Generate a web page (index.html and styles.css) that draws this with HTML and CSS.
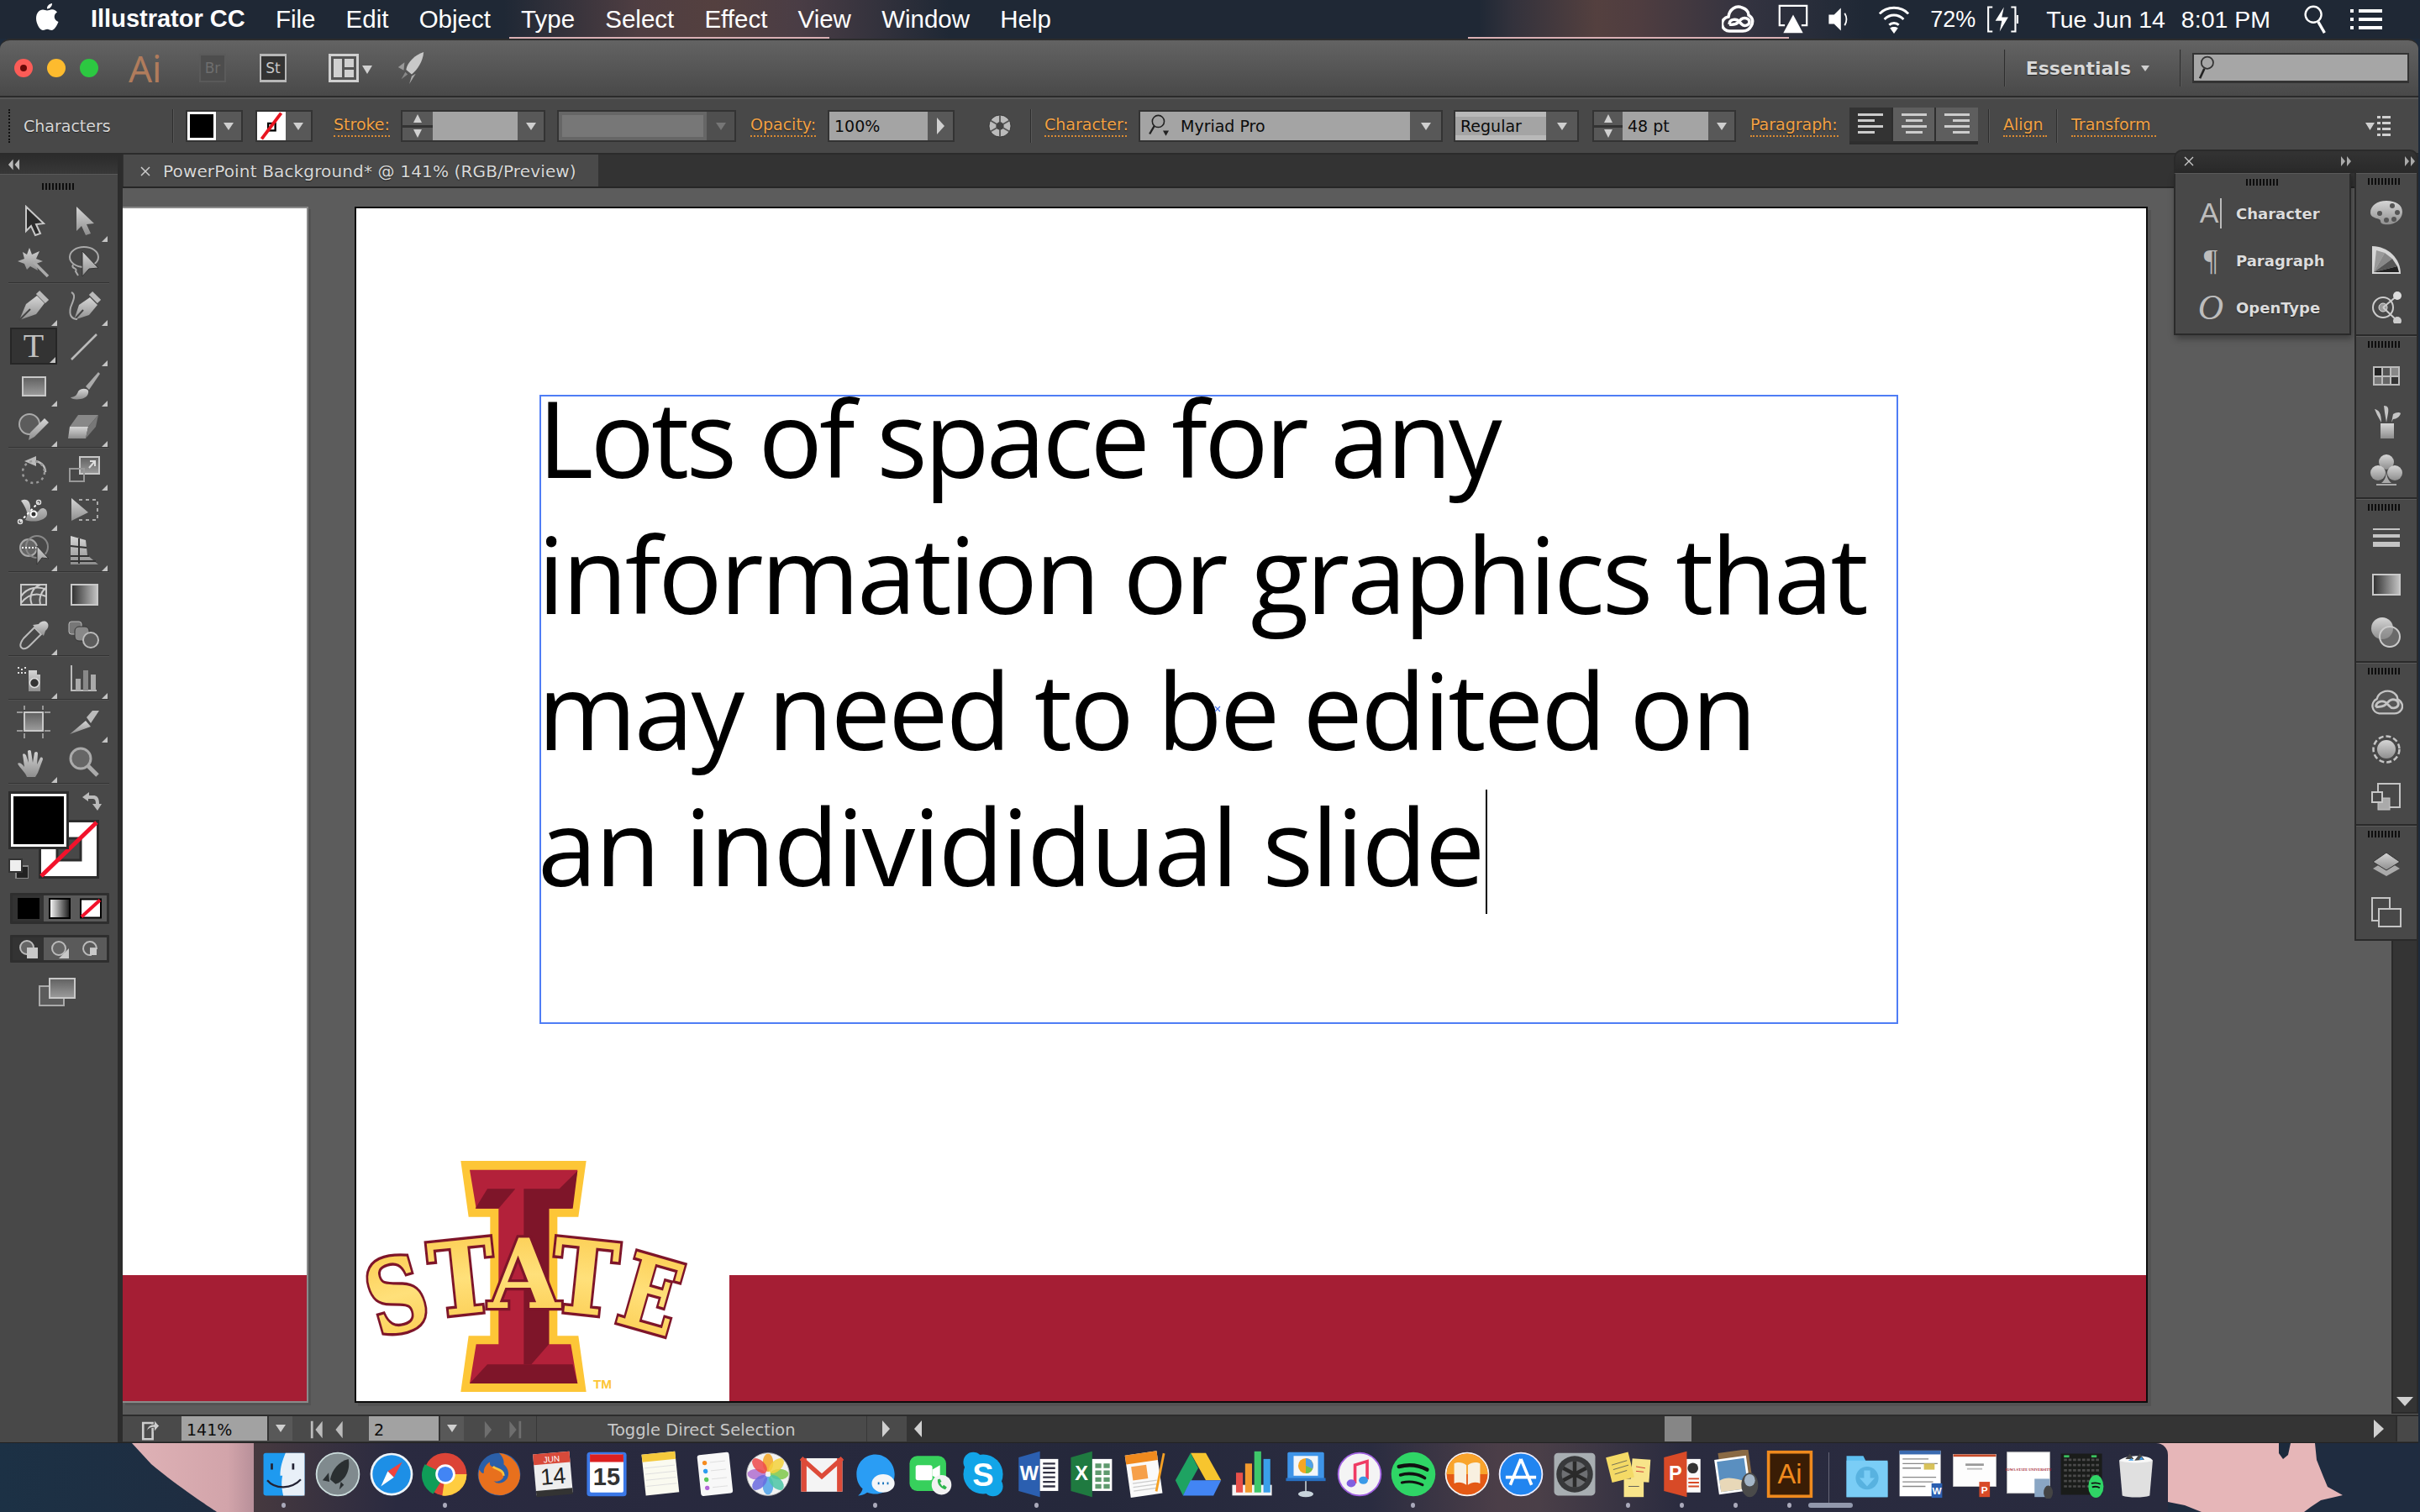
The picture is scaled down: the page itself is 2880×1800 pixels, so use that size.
FILE: index.html
```html
<!DOCTYPE html>
<html lang="en">
<head>
<meta charset="utf-8">
<title>Illustrator CC</title>
<link rel="stylesheet" href="styles.css">
</head>
<body>
<svg class="defs" aria-hidden="true"><defs>
<linearGradient id="ig" x1="0" y1="0" x2="0" y2="1"><stop offset="0" stop-color="#d6d6d6"/><stop offset="1" stop-color="#8e8e8e"/></linearGradient>
<linearGradient id="ih" x1="0" y1="0" x2="1" y2="0"><stop offset="0" stop-color="#2e2e2e"/><stop offset="1" stop-color="#c4c4c4"/></linearGradient>
<linearGradient id="iw" x1="0" y1="0" x2="1" y2="0"><stop offset="0" stop-color="#f4f4f4"/><stop offset="1" stop-color="#222"/></linearGradient>
<linearGradient id="id" x1="0" y1="0" x2="0" y2="1"><stop offset="0" stop-color="#606060"/><stop offset="1" stop-color="#9c9c9c"/></linearGradient>
<linearGradient id="pk" x1="0" y1="0" x2="1" y2="0"><stop offset="0" stop-color="#dfb2b6"/><stop offset=".7" stop-color="#d2a4aa"/><stop offset="1" stop-color="#a98490"/></linearGradient>
<linearGradient id="ly" x1="0" y1="0" x2="0" y2="1"><stop offset="0" stop-color="#fbc94a"/><stop offset=".5" stop-color="#ffe07a"/><stop offset="1" stop-color="#fbc94a"/></linearGradient>
</defs></svg>

<header class="menubar">
  <svg class="apple" viewBox="0 0 28 34"><path d="M20 0c.3 3-2.6 6.800-6 6.500C13.600 3.300 16.800.3 20 0zM14 8.500c2 0 3.500-1.300 6-1.300 2.600 0 4.800 1.400 6 3.300-5 3-4 9.500 1.500 11.500-1.500 4-5 10-8 10-2 0-3-1.300-5.300-1.300S11 32 9 32C5 32 1 23.500 1 18 1 11.500 5 7.500 9 7.500c2 0 3.500 1 5 1z" fill="#fff"/></svg>
  <nav class="menus">
    <b class="appname">Illustrator CC</b><span>File</span><span>Edit</span><span>Object</span><span>Type</span><span>Select</span><span>Effect</span><span>View</span><span>Window</span><span>Help</span>
  </nav>
  <div class="status-icons">
    <svg class="si si-cc" viewBox="0 0 40 40"><g fill="none" stroke="#fff" stroke-width="3.500"><path d="M10 34a8.500 8.500 0 0 1-2-17C9 8 17 3 24 6c6 2 8 6 8 9 5 3 6 8 3 13-2 4-5 6-10 6z"/><path d="M9 26c0-7 9-7 12-3l3 3c3 3 9 1 9-3s-6-6-10-3l-4 4c-3 3-10 2-10 2"/></g></svg>
    <svg class="si si-air" viewBox="0 0 40 40"><path d="M9 28H2V2h36v26h-7" fill="none" stroke="#fff" stroke-width="2.500"/><path d="M20 14 33 38H7z" fill="#fff"/></svg>
    <svg class="si si-vol" viewBox="0 0 30 40"><path d="M1 14h7l9-9v30l-9-9H1z" fill="#fff"/><path d="M22 12c3 5 3 11 0 16" fill="none" stroke="#fff" stroke-width="2"/></svg>
    <svg class="si si-wifi" viewBox="0 0 40 40"><g fill="none" stroke="#fff" stroke-width="3"><path d="M2 13C11 3 29 3 38 13"/><path d="M8 20c7-7 17-7 24 0"/><path d="M14 27c3-3 9-3 12 0"/></g><path d="M20 38l-5-7c3-2 7-2 10 0z" fill="#fff"/></svg>
    <span class="batt">72%</span>
    <svg class="si si-bat" viewBox="0 0 46 40"><path d="M8 3H2v34h6M34 3h6v34h-6M43 14v12" fill="none" stroke="#fff" stroke-width="2.500"/><path d="M24 3 12 22h9l-3 15 12-20h-9z" fill="#fff"/></svg>
    <span class="clock">Tue Jun 14</span>
    <span class="clock clock-2">8:01 PM</span>
    <svg class="si si-search" viewBox="0 0 30 40"><circle cx="13" cy="14" r="10" fill="none" stroke="#fff" stroke-width="2.500"/><path d="M19 23l8 14" stroke="#fff" stroke-width="3.500"/></svg>
    <svg class="si si-list" viewBox="0 0 38 30"><path d="M0 3h4v4H0zM10 3h28v4H10zM0 13h4v4H0zM10 13h28v4H10zM0 23h4v4H0zM10 23h28v4H10z" fill="#fff"/></svg>
  </div>
</header>

<div class="window">
  <div class="appbar">
    <span class="light light-r"><i></i></span><span class="light light-y"></span><span class="light light-g"></span>
    <span class="ai-mark">Ai</span>
    <span class="brbox">Br</span>
    <span class="stbox">St</span>
    <svg class="arr-layout" viewBox="0 0 52 34"><rect x="1.500" y="1.500" width="33" height="31" fill="#555" stroke="#d0d0d0" stroke-width="3"/><rect x="6" y="6" width="10" height="22" fill="#d0d0d0"/><rect x="19" y="6" width="11" height="10" fill="#d0d0d0"/><rect x="19" y="19" width="11" height="9" fill="#d0d0d0"/><path d="M40 14h12l-6 10z" fill="#d0d0d0"/></svg>
    <svg class="rocket" viewBox="0 0 34 40"><path d="M33 0C22 3 12 14 11 22l7 6C25 22 32 12 33 0z" fill="#c8c8c8"/><path d="M9 13 1 19l7 4z" fill="#999"/><path d="M18 30l-3 10 8-13z" fill="#aaa"/><path d="M10 25l-5 9 8-6z" fill="#888"/></svg>
    <span class="vsep vsep-ess"></span>
    <span class="essentials">Essentials</span>
    <i class="caret caret-ess"></i>
    <span class="vsep vsep-search"></span>
    <div class="searchfield"><svg class="searchglass" viewBox="0 0 22 34"><circle cx="12" cy="11" r="8" fill="none" stroke="#333" stroke-width="2"/><path d="M8 19 2 32" stroke="#222" stroke-width="3"/></svg></div>
  </div>

  <div class="control">
    <i class="cgrip"></i>
    <span class="ctl-title">Characters</span>
    <i class="vsep"></i>
    <div class="combo swatch swatch-1"><span class="sw-fill"></span><span class="dd"><i class="caret"></i></span></div>
    <div class="combo swatch swatch-2"><span class="sw-none"><svg viewBox="0 0 36 44"><rect width="36" height="44" fill="#fff"/><rect x="13" y="18" width="11" height="11" fill="none" stroke="#000" stroke-width="3"/><path d="M3 42 33 2" stroke="#e8141f" stroke-width="5"/></svg></span><span class="dd"><i class="caret"></i></span></div>
    <span class="lnk lnk-stroke">Stroke:</span>
    <div class="combo combo-stroke"><span class="stepper"><i class="up"></i><i class="down"></i></span><span class="field field-stroke"></span><span class="dd"><i class="caret"></i></span></div>
    <div class="combo combo-dis"><span class="field-dis"></span><span class="dd dd-dis"><i class="caret caret-dim"></i></span></div>
    <span class="lnk lnk-opacity">Opacity:</span>
    <div class="combo combo-op"><span class="field field-op">100%</span><span class="dd dd-op"><i class="tri-r"></i></span></div>
    <svg class="globe" viewBox="0 0 30 30"><circle cx="15" cy="15" r="14" fill="#bbb" stroke="#333"/><path d="M15 1v28M3 8l24 14M27 8 3 22" stroke="#555" stroke-width="2"/><circle cx="15" cy="15" r="5" fill="#444"/></svg>
    <i class="vsep vsep-char"></i>
    <span class="lnk lnk-char">Character:</span>
    <div class="combo combo-font"><span class="field field-font"><svg class="fontglass" viewBox="0 0 34 38"><circle cx="15" cy="12" r="9" fill="none" stroke="#222" stroke-width="2"/><path d="M9 19 2 31" stroke="#222" stroke-width="3"/><path d="M22 26h9l-4.500 8z" fill="#222"/></svg>Myriad Pro</span><span class="dd dd-font"><i class="caret"></i></span></div>
    <div class="combo combo-weight"><span class="field field-weight">Regular</span><span class="dd dd-font"><i class="caret"></i></span></div>
    <div class="combo combo-size"><span class="stepper"><i class="up"></i><i class="down"></i></span><span class="field field-size">48 pt</span><span class="dd"><i class="caret"></i></span></div>
    <span class="lnk lnk-para">Paragraph:</span>
    <div class="aligns">
      <span class="al al-on"><svg viewBox="0 0 30 28"><path d="M0 1h30v3H0zM0 8h20v3H0zM0 15h30v3H0zM0 22h20v3H0z" fill="#ccc"/></svg></span>
      <span class="al"><svg viewBox="0 0 30 28"><path d="M0 1h30v3H0zM5 8h20v3H5zM0 15h30v3H0zM5 22h20v3H5z" fill="#ccc"/></svg></span>
      <span class="al"><svg viewBox="0 0 30 28"><path d="M0 1h30v3H0zM10 8h20v3H10zM0 15h30v3H0zM10 22h20v3H10z" fill="#ccc"/></svg></span>
    </div>
    <i class="vsep vsep-p"></i>
    <span class="lnk lnk-align">Align</span>
    <i class="vsep vsep-a"></i>
    <span class="lnk lnk-trans">Transform</span>
    <svg class="ctlmenu" viewBox="0 0 30 26"><path d="M0 9h11l-5.500 9zM14 1h4v3h-4zM20 1h10v3H20zM14 8h4v3h-4zM20 8h10v3H20zM14 15h4v3h-4zM20 15h10v3H20zM14 22h4v3h-4zM20 22h10v3H20z" fill="#d0d0d0"/></svg>
  </div>

  <div class="workspace">
    <aside class="toolbar">
      <div class="tb-head"><svg class="chev" viewBox="0 0 16 14"><path d="M7 0 1 7l6 7zM15 0 9 7l6 7z" fill="#bbb"/></svg></div>
      <div class="tb-body">
        <i class="grip tb-grip"></i>
        <div class="tgroup">
          <div class="trow">
            <span class="tool"><svg viewBox="0 0 40 40"><path d="M11 2 32 22l-9 1 5 11-6 2-5-11-6 6z" fill="#2b2b2b" stroke="#c8c8c8" stroke-width="2"/></svg></span>
            <span class="tool more"><svg viewBox="0 0 40 40"><path d="M11 2 32 22l-9 1 5 11-6 2-5-11-6 6z" fill="url(#ig)"/></svg></span>
          </div>
          <div class="trow">
            <span class="tool"><svg viewBox="0 0 40 40"><path d="M15 3l3 8 9-4-4 9 8 3-8 3 2 8-9-5-4 4-3-7-8-3 8-3-2-8 5 3z" fill="url(#ig)"/><path d="M20 20l17 17" stroke="#aaa" stroke-width="3.500"/></svg></span>
            <span class="tool"><svg viewBox="0 0 40 40"><ellipse cx="20" cy="14" rx="17" ry="12" fill="none" stroke="#aaa" stroke-width="2"/><path d="M7 23c-3 5 6 4 3 8l3 5" fill="none" stroke="#aaa" stroke-width="2"/><path d="M18 7l19 20-11 1-8 9z" fill="url(#ig)" stroke="#333"/></svg></span>
          </div>
        </div>
        <i class="tsep"></i>
        <div class="tgroup">
          <div class="trow">
            <span class="tool more"><svg viewBox="0 0 40 40"><path d="M3 37 11 18l13-10 9 9-10 13z" fill="url(#ig)"/><path d="M3 37l13-13" stroke="#444" stroke-width="2"/><path d="M25 4l11 11" stroke="#bbb" stroke-width="6"/></svg></span>
            <span class="tool more"><svg viewBox="0 0 40 40"><path d="M8 37 14 19l13-9 9 9-10 12z" fill="url(#ig)"/><path d="M8 37l11-12" stroke="#444" stroke-width="2"/><path d="M28 5l10 10" stroke="#bbb" stroke-width="6"/><path d="M5 4c6 3 2 10-1 18-2 9 1 14 8 14" fill="none" stroke="#aaa" stroke-width="2"/></svg></span>
          </div>
          <div class="trow">
            <span class="tool tool-on more"><span class="t-glyph">T</span></span>
            <span class="tool more"><svg viewBox="0 0 40 40"><path d="M5 36 35 6" stroke="#bbb" stroke-width="2.500"/></svg></span>
          </div>
          <div class="trow">
            <span class="tool more"><svg viewBox="0 0 40 40"><rect x="7" y="9" width="27" height="22" fill="url(#id)" stroke="#c8c8c8" stroke-width="2"/></svg></span>
            <span class="tool more"><svg viewBox="0 0 40 40"><path d="M22 20 37 3l2 2-13 19z" fill="#aaa"/><path d="M4 33c6 0 8-4 9-7 3-4 10-4 12-1 1 4-2 9-9 10-6 1-11 0-12-2z" fill="url(#ig)"/></svg></span>
          </div>
          <div class="trow">
            <span class="tool more"><svg viewBox="0 0 40 40"><circle cx="15" cy="17" r="12" fill="#5c5c5c" stroke="#aaa" stroke-width="2"/><path d="M14 36l2-9 17-17 5 5-17 17z" fill="url(#ig)"/></svg></span>
            <span class="tool more"><svg viewBox="0 0 40 40"><path d="M13 6h24L25 20H3z" fill="#888"/><path d="M3 20h22l-3 14H1z" fill="url(#ig)"/><path d="M25 20 37 6l-3 14-12 14z" fill="#777"/></svg></span>
          </div>
        </div>
        <i class="tsep"></i>
        <div class="tgroup">
          <div class="trow">
            <span class="tool more"><svg viewBox="0 0 40 40"><path d="M34 22a13 13 0 0 0-14-13" fill="none" stroke="#bbb" stroke-width="2.500"/><path d="M23 3 9 9l14 6z" fill="#bbb"/><circle cx="20" cy="22" r="13" fill="none" stroke="#999" stroke-width="2.500" stroke-dasharray="3 4"/></svg></span>
            <span class="tool more"><svg viewBox="0 0 40 40"><rect x="15" y="4" width="23" height="20" fill="url(#id)" stroke="#c8c8c8" stroke-width="2"/><rect x="3" y="18" width="17" height="15" fill="none" stroke="#999" stroke-width="2"/><path d="M26 17 33 9M27 9h6v6" fill="none" stroke="#ddd" stroke-width="2"/></svg></span>
          </div>
          <div class="trow">
            <span class="tool more"><svg viewBox="0 0 40 40"><path d="M5 8c7-4 12 2 11 9-1 6 7 8 11 2 3-4 9-2 9 4 1 8-15 12-26 8 5-7 1-14-5-23z" fill="url(#ig)"/><path d="M4 33 26 10" stroke="#fff" stroke-width="2" stroke-dasharray="3 3"/><circle cx="20" cy="24" r="3.500" fill="#333" stroke="#fff" stroke-width="2"/><circle cx="4" cy="33" r="2.500" fill="none" stroke="#ddd" stroke-width="1.500"/><circle cx="26" cy="10" r="2.500" fill="none" stroke="#ddd" stroke-width="1.500"/></svg></span>
            <span class="tool"><svg viewBox="0 0 40 40"><path d="M5 5 25 22 5 32z" fill="url(#ig)"/><path d="M14 7h22v24H14" fill="none" stroke="#aaa" stroke-width="2" stroke-dasharray="4 4"/></svg></span>
          </div>
          <div class="trow">
            <span class="tool more"><svg viewBox="0 0 40 40"><circle cx="14" cy="16" r="10" fill="#666" stroke="#aaa" stroke-width="2"/><circle cx="24" cy="15" r="13" fill="none" stroke="#888" stroke-width="2"/><path d="M6 16h20" stroke="#fff" stroke-width="2" stroke-dasharray="2 2"/><path d="M24 14l14 15-8-1-6 8z" fill="url(#ig)" stroke="#333"/></svg></span>
            <span class="tool more"><svg viewBox="0 0 40 40"><path d="M4 2l18 5 2 18 13 11H4z" fill="url(#ig)"/><path d="M4 14l19 2M4 26h22M14 5v30M4 32h30" stroke="#333" stroke-width="2"/></svg></span>
          </div>
        </div>
        <i class="tsep"></i>
        <div class="tgroup">
          <div class="trow">
            <span class="tool"><svg viewBox="0 0 40 40"><rect x="5" y="8" width="30" height="24" fill="#555" stroke="#c8c8c8" stroke-width="2"/><path d="M5 22c8-12 22-12 30-8M5 30c6-8 16-14 30-8M18 32c-4-10 0-20 10-24M28 32c-2-8 0-14 6-20" fill="none" stroke="#ccc" stroke-width="2"/></svg></span>
            <span class="tool"><svg viewBox="0 0 40 40"><rect x="5" y="8" width="31" height="24" fill="url(#ih)" stroke="#c8c8c8" stroke-width="2"/></svg></span>
          </div>
          <div class="trow">
            <span class="tool more"><svg viewBox="0 0 40 40"><path d="M7 36c-5-2-2-8 1-12l13-13 8 8-13 13c-3 3-6 5-9 4z" fill="none" stroke="#bbb" stroke-width="2"/><path d="M19 8l13 13 2-6c3-2 5-7 2-10s-8-1-10 2z" fill="url(#ig)"/></svg></span>
            <span class="tool"><svg viewBox="0 0 40 40"><rect x="2" y="4" width="15" height="15" rx="3" fill="#777" stroke="#bbb"/><rect x="9" y="10" width="17" height="17" rx="5" fill="#888" stroke="#333"/><circle cx="28" cy="26" r="9" fill="#5c5c5c" stroke="#bbb" stroke-width="2"/></svg></span>
          </div>
        </div>
        <i class="tsep"></i>
        <div class="tgroup">
          <div class="trow">
            <span class="tool more"><svg viewBox="0 0 40 40"><path d="M14 10h10v5h4v20H14z" fill="url(#ig)"/><circle cx="21" cy="25" r="5.500" fill="#333" stroke="#ddd" stroke-width="1.500"/><path d="M1 6h2v2H1zM5 8h2v2H5zM9 6h2v2H9zM1 12h2v2H1zM5 12h2v2H5zM9 12h2v2H9z" fill="#ddd"/></svg></span>
            <span class="tool more"><svg viewBox="0 0 40 40"><path d="M5 4v30h30" fill="none" stroke="#bbb" stroke-width="2"/><rect x="10" y="20" width="6" height="14" fill="#aaa"/><rect x="19" y="10" width="6" height="24" fill="#888"/><rect x="28" y="15" width="6" height="19" fill="#aaa"/></svg></span>
          </div>
        </div>
        <i class="tsep"></i>
        <div class="tgroup">
          <div class="trow">
            <span class="tool"><svg viewBox="0 0 40 40"><rect x="9" y="8" width="22" height="22" fill="url(#id)" stroke="#c8c8c8" stroke-width="2"/><path d="M0 8h7M33 8h7M0 30h7M33 30h7M9 0v5M31 0v5M9 33v6M31 33v6" stroke="#999" stroke-width="2"/></svg></span>
            <span class="tool more"><svg viewBox="0 0 40 40"><path d="M3 34 22 18l6 7z" fill="url(#ig)"/><path d="M23 14 30 6h8l-10 15z" fill="#bbb"/></svg></span>
          </div>
          <div class="trow">
            <span class="tool more"><svg viewBox="0 0 40 40"><path d="M12 37c-2-6-8-10-11-16 2-2 5 0 8 4l-2-15c2-2 3 0 4 1l3 9-1-14c2-2 4-1 4 1l2 13 2-12c2-2 4-1 4 1l-1 13 4-8c2-1 3 0 3 2l-6 16-3 5z" fill="url(#ig)"/></svg></span>
            <span class="tool"><svg viewBox="0 0 40 40"><circle cx="16" cy="15" r="12" fill="#666" stroke="#aaa" stroke-width="3"/><path d="M25 24l11 11" stroke="#aaa" stroke-width="5"/></svg></span>
          </div>
        </div>
        <i class="tsep"></i>
        <div class="colorbox">
          <span class="stroke-box"><svg viewBox="0 0 72 70"><rect width="72" height="70" fill="#2c2c2c"/><rect x="3" y="3" width="66" height="64" fill="#fff"/><rect x="22" y="22" width="28" height="26" fill="#484848" stroke="#2c2c2c" stroke-width="3"/><path d="M3 67 69 3" stroke="#f2122b" stroke-width="5"/></svg></span>
          <span class="fill-box"></span>
          <svg class="swap" viewBox="0 0 24 22"><path d="M9 0 1 6l7 5V8h6c2 0 3 2 3 6h-4l6 8 5-8h-3c0-8-3-10-7-10H9z" fill="#bbb"/></svg>
          <svg class="defaults" viewBox="0 0 24 24"><rect x="9" y="9" width="15" height="15" fill="#222" stroke="#888" stroke-width="2"/><rect x="1" y="1" width="15" height="15" fill="#eee" stroke="#333" stroke-width="2"/></svg>
        </div>
        <div class="modes modes-a">
          <span class="mode mode-on"><i class="m-black"></i></span>
          <span class="mode"><i class="m-grad"></i></span>
          <span class="mode"><svg class="m-none" viewBox="0 0 26 24"><rect width="26" height="24" fill="#000"/><rect x="2" y="2" width="22" height="20" fill="#fff"/><path d="M2 22 24 2" stroke="#f2122b" stroke-width="4"/></svg></span>
        </div>
        <div class="modes modes-b">
          <span class="mode mode-on"><svg viewBox="0 0 22 22"><circle cx="9" cy="9" r="8" fill="#666" stroke="#bbb" stroke-width="2"/><rect x="9" y="9" width="13" height="13" fill="#c8c8c8"/></svg></span>
          <span class="mode"><svg viewBox="0 0 22 22"><circle cx="10" cy="10" r="8" fill="#666" stroke="#bbb" stroke-width="2"/><path d="M22 10v12H10z" fill="#c8c8c8"/></svg></span>
          <span class="mode"><svg viewBox="0 0 22 22"><path d="M11 18a8 8 0 1 1 7-8h-7z" fill="none" stroke="#bbb" stroke-width="2"/><rect x="10" y="10" width="8" height="8" fill="#c8c8c8"/></svg></span>
        </div>
        <svg class="screen" viewBox="0 0 44 34"><rect x="1" y="10" width="29" height="23" fill="#5c5c5c" stroke="#aaa" stroke-width="2"/><rect x="13" y="1" width="30" height="23" fill="url(#id)" stroke="#c8c8c8" stroke-width="2"/></svg>
      </div>
    </aside>

    <main class="main">
      <div class="tabrow">
        <div class="tab"><svg class="xmark" viewBox="0 0 12 12"><path d="M1 1l10 10M11 1 1 11" stroke="#ccc" stroke-width="1.500"/></svg><span>PowerPoint Background* @ 141% (RGB/Preview)</span></div>
      </div>
      <div class="canvas">
        <section class="artboard side">
          <div class="ab-page"></div>
          <div class="ab-band"><div class="band-red"></div></div>
        </section>
        <section class="artboard big">
          <div class="ab-page"></div>
          <div class="ab-band"><div class="band-white"></div><div class="band-red"></div></div>
          <div class="textframe">
            <p class="tl tl-1">Lots of space for any</p>
            <p class="tl tl-2">information or graphics that</p>
            <p class="tl tl-3">may need to be edited on</p>
            <p class="tl tl-4">an individidual slide</p>
          </div>
          <i class="caretbar"></i>
          <svg class="centermark" viewBox="0 0 8 8"><path d="M1 1l6 6M7 1 1 7" stroke="#4a78f0" stroke-width="1.200"/></svg>
          <svg class="logo" viewBox="75 20 1200 900">
            <path d="M445 65H893L865 265H790V690H865L893 890H445L473 690H550V265H473Z" fill="#fdc637"/>
            <path d="M477 97H862L840 235H760V720H838L862 860H477L500 720H580V235H500Z" fill="#b3213a"/>
            <path d="M670 165H797L862 100 845 235H760V720L697 792H670Z" fill="#7e1529"/>
            <path d="M540 165H640L580 235H497Z" fill="#7e1529"/>
            <path d="M540 792H845L862 860H477Z" fill="#7e1529"/>
            <g class="logo-letters">
              <text transform="translate(251 668) rotate(-16) scale(.95 1.200)">S</text>
              <text transform="translate(464 610) rotate(-6) scale(1.050 1.200)">T</text>
              <text transform="translate(874 610) rotate(6) scale(1.050 1.200)">T</text>
              <text transform="translate(1089 666) rotate(16) scale(.9 1.200)">E</text>
              <text transform="translate(672 591) scale(1.100 1.150)">A</text>
            </g>
            <text class="logo-tm" x="918" y="878">TM</text>
          </svg>
        </section>
        <div class="vscroll"><i class="tri-d"></i></div>
      </div>
      <div class="statusbar">
        <svg class="st-share" viewBox="0 0 26 32"><path d="M3 8h13v22H3z" fill="none" stroke="#ccc" stroke-width="3"/><path d="M8 20c0-7 5-10 10-10V4l7 8-7 8v-6c-4 0-8 1-10 6z" fill="#ccc" stroke="#444"/></svg>
        <div class="st-combo st-zoom"><span class="st-field">141%</span><span class="dd"><i class="caret"></i></span></div>
        <svg class="st-nav st-nav-a" viewBox="0 0 50 26"><path d="M1 2h3v22H1zM16 2v22L7 13zM42 2v22l-9-11z" fill="#bbb"/></svg>
        <div class="st-combo st-page"><span class="st-field">2</span><span class="dd"><i class="caret"></i></span></div>
        <svg class="st-nav st-nav-b" viewBox="0 0 50 26"><path d="M1 2v22l9-11zM33 2v22l9-11zM45 2h3v22h-3z" fill="#6e6e6e"/></svg>
        <div class="st-msg">Toggle Direct Selection</div>
        <span class="st-btn"><i class="tri-r tri-sm"></i></span>
        <div class="hscroll">
          <i class="tri-l"></i>
          <i class="thumb"></i>
          <i class="tri-r tri-big"></i>
        </div>
        <span class="corner"></span>
      </div>
      <aside class="dockpanel">
        <div class="dp-head">
          <svg class="dp-x" viewBox="0 0 12 12"><path d="M1 1l10 10M11 1 1 11" stroke="#ccc" stroke-width="1.300"/></svg>
          <svg class="dp-ff dp-ff-1" viewBox="0 0 14 12"><path d="M1 0l5 6-5 6zM8 0l5 6-5 6z" fill="#aaa"/></svg>
          <svg class="dp-ff dp-ff-2" viewBox="0 0 14 12"><path d="M1 0l5 6-5 6zM8 0l5 6-5 6z" fill="#aaa"/></svg>
        </div>
        <div class="dp-body">
          <div class="flyout">
            <i class="grip fly-grip"></i>
            <div class="fly-row"><span class="fly-ico fly-a">A<i></i></span><b>Character</b></div>
            <div class="fly-row"><span class="fly-ico fly-p">¶</span><b>Paragraph</b></div>
            <div class="fly-row"><span class="fly-ico fly-o">O</span><b>OpenType</b></div>
          </div>
          <div class="strip">
            <div class="sgroup s1"><i class="grip"></i>
              <span class="sic"><svg viewBox="0 0 40 40"><path d="M20 6C9 6 1 12 1 20c0 8 12 6 12 10 0 4 5 5 12 4 9-2 14-8 14-15 0-8-8-13-19-13z" fill="url(#ig)"/><circle cx="27" cy="12" r="3" fill="#555"/><circle cx="33" cy="20" r="3" fill="#555"/><circle cx="29" cy="28" r="3" fill="#555"/><circle cx="20" cy="29" r="3" fill="#555"/><circle cx="12" cy="21" r="3" fill="#555"/></svg></span>
              <span class="sic"><svg viewBox="0 0 40 40"><path d="M3 4c19 0 34 15 34 33H3z" fill="#d6d6d6"/><path d="M5 35 8 9l10 3z" fill="#999"/><path d="M5 35l13-23 9 7z" fill="#888"/><path d="M5 35l22-16 6 9z" fill="#555"/><path d="M5 35l28-7 2 7z" fill="#222"/></svg></span>
              <span class="sic"><svg viewBox="0 0 40 40"><circle cx="16" cy="21" r="12" fill="none" stroke="#ccc" stroke-width="2"/><circle cx="16" cy="21" r="5" fill="#999" stroke="#ddd"/><path d="M16 21 33 7M16 21l17 16" stroke="#ccc" stroke-width="2"/><circle cx="33" cy="7" r="5" fill="#ddd"/><circle cx="33" cy="37" r="5" fill="#ccc"/></svg></span>
            </div>
            <div class="sgroup s1"><i class="grip"></i>
              <span class="sic"><svg viewBox="0 0 40 40"><rect x="4" y="9" width="32" height="23" fill="#bbb"/><path d="M6 11h8v9H6z" fill="#222"/><path d="M16 11h8v9h-8z" fill="#555"/><path d="M26 11h8v9h-8z" fill="#888"/><path d="M6 22h8v8H6z" fill="#777"/><path d="M16 22h8v8h-8z" fill="#666"/><path d="M26 22h8v8h-8z" fill="#333"/></svg></span>
              <span class="sic"><svg viewBox="0 0 40 40"><rect x="13" y="21" width="16" height="18" fill="url(#ig)"/><path d="M14 20 9 11l-3-7c5 1 8 5 8 16zM20 20l-2-12-1-8c5 0 6 3 5 9zM26 20l2-10c3-2 7-3 9-1-1 4-5 7-9 7z" fill="#c4c4c4"/></svg></span>
              <span class="sic"><svg viewBox="0 0 40 40"><circle cx="20" cy="11" r="9" fill="url(#ig)"/><circle cx="10" cy="24" r="9" fill="url(#ig)"/><circle cx="30" cy="24" r="9" fill="url(#ig)"/><path d="M20 20c0 8-2 13-6 16h12c-4-3-6-8-6-16zM8 37h24v2H8z" fill="#aaa"/></svg></span>
            </div>
            <div class="sgroup s3"><i class="grip"></i>
              <span class="sic"><svg viewBox="0 0 40 40"><path d="M4 8h32v2H4zM4 15h32v4H4zM4 24h32v6H4z" fill="#c4c4c4"/></svg></span>
              <span class="sic"><svg viewBox="0 0 40 40"><rect x="4" y="7" width="32" height="24" fill="url(#ih)" stroke="#c8c8c8" stroke-width="2"/></svg></span>
              <span class="sic"><svg viewBox="0 0 40 40"><circle cx="15" cy="15" r="13" fill="url(#ig)"/><circle cx="24" cy="25" r="12" fill="#88888888" stroke="#ccc" stroke-width="2"/></svg></span>
            </div>
            <div class="sgroup s4"><i class="grip"></i>
              <span class="sic"><svg viewBox="0 0 42 40"><path d="M12 34a9.500 9.500 0 0 1-3-18c2-8 11-12 19-9 4 2 7 5 7 9 6 3 7 9 5 13-2 3-5 5-9 5z" fill="#555" stroke="#c4c4c4" stroke-width="2.500"/><path d="M8 26c0-8 10-9 14-4l3 3c3 4 11 2 11-3s-7-7-11-4l-5 5c-3 3-12 3-12 3" fill="none" stroke="#c4c4c4" stroke-width="3"/></svg></span>
              <span class="sic"><svg viewBox="0 0 40 40"><circle cx="20" cy="20" r="15.500" fill="none" stroke="#c4c4c4" stroke-width="2.500" stroke-dasharray="6 3"/><circle cx="20" cy="20" r="11" fill="url(#ig)"/></svg></span>
              <span class="sic"><svg viewBox="0 0 40 40"><path d="M10 17V5h26v28H24" fill="none" stroke="#c4c4c4" stroke-width="2"/><rect x="10" y="22" width="14" height="14" fill="#aaa" stroke="#c8c8c8"/><rect x="3" y="15" width="12" height="12" fill="#484848" stroke="#c8c8c8" stroke-width="2"/></svg></span>
            </div>
            <div class="sgroup s5"><i class="grip"></i>
              <span class="sic"><svg viewBox="0 0 40 40"><path d="M4 24 20 14l16 10-16 9z" fill="#aaa"/><path d="M4 16 20 5l16 11-16 10z" fill="url(#ig)" stroke="#333"/></svg></span>
              <span class="sic"><svg viewBox="0 0 40 40"><rect x="3" y="3" width="21" height="27" fill="#484848" stroke="#c4c4c4" stroke-width="2"/><rect x="11" y="16" width="26" height="21" fill="#484848" stroke="#c4c4c4" stroke-width="2"/></svg></span>
            </div>
          </div>
        </div>
      </aside>
    </main>
  </div>
</div>

<footer class="desk">
  <svg class="wall" viewBox="0 0 2880 82" preserveAspectRatio="none"><path d="M157 0H320V82H258C240 70 210 50 180 25z" fill="url(#pk)"/><path d="M2560 0H2755L2757 20 2765 40 2770 52 2788 62 2762 68 2750 76 2742 82H2620L2600 74 2580 70H2560z" fill="#e6b6b8"/><path d="M2712 0h14l-3 14-6 5-5-7z" fill="#1c2a3c"/></svg>
  <div class="dock">
    <span class="di on"><svg viewBox="0 0 64 64"><rect x="5" y="4" width="54" height="56" rx="3" fill="#1e9af0"/><path d="M34 4h25v56H31c-2-9-3-16-1-26h-3c0-12 3-20 7-30z" fill="#e8f0f8"/><path d="M16 18v8M44 18v8" stroke="#223" stroke-width="3"/><path d="M10 40c10 12 32 12 44-1" fill="none" stroke="#223" stroke-width="2.500"/></svg></span>
    <span class="di"><svg viewBox="0 0 64 64"><circle cx="32" cy="32" r="28" fill="#808a8e" stroke="#cdd" stroke-width="2"/><path d="M46 12c-12 3-22 14-24 27l7 6c12-4 20-18 17-33z" fill="#2a2f31"/><path d="M20 30l-8 10 9 2zM36 42l-2 10 6-6z" fill="#2a2f31"/></svg></span>
    <span class="di"><svg viewBox="0 0 64 64"><circle cx="32" cy="32" r="28" fill="#eef4f8"/><circle cx="32" cy="32" r="25" fill="#1d8fe6"/><path d="M46 16 27 28l8 8z" fill="#f0443e"/><path d="M18 48 27 28l8 8z" fill="#fff"/></svg></span>
    <span class="di on"><svg viewBox="0 0 64 64"><circle cx="32" cy="32" r="28" fill="#dc4437"/><path d="M32 32 16 58a28 28 0 0 1-11-39z" fill="#0f9d58"/><path d="M32 32h28a28 28 0 0 1-32 28z" fill="#ffcd40"/><circle cx="32" cy="32" r="13" fill="#fff"/><circle cx="32" cy="32" r="10" fill="#4285f4"/></svg></span>
    <span class="di"><svg viewBox="0 0 64 64"><circle cx="32" cy="32" r="28" fill="#2b5fa8"/><path d="M32 4c20 2 32 22 26 38-5 14-21 21-34 16C10 54 2 40 6 26c2 4 5 6 6 4-1-6 4-12 8-14-1 4 1 6 4 6 4 4 14 4 14 12 0 5-7 9-13 7 5 5 14 3 18-4 3-7 0-14-5-18 1-6-2-11-6-15z" fill="#e8701d"/><path d="M24 22c4 4 14 4 14 12" fill="none" stroke="#f9c23c" stroke-width="3"/></svg></span>
    <span class="di"><svg viewBox="0 0 64 64"><g transform="rotate(-5 32 32)"><rect x="8" y="4" width="48" height="54" fill="#eee"/><rect x="8" y="4" width="48" height="14" fill="#d84a3a"/><text class="d-cal-m" x="32" y="16">JUN</text><text class="d-cal" x="32" y="45">14</text><rect x="8" y="52" width="48" height="8" fill="#333"/></g></svg></span>
    <span class="di"><svg viewBox="0 0 64 64"><rect x="6" y="3" width="52" height="58" rx="4" fill="#3b78e7"/><rect x="10" y="6" width="44" height="50" rx="2" fill="#fff"/><rect x="10" y="6" width="44" height="10" fill="#dc2020"/><text class="d-gcal" x="32" y="46">15</text></svg></span>
    <span class="di"><svg viewBox="0 0 64 64"><g transform="rotate(-6 32 32)"><rect x="10" y="4" width="44" height="54" fill="#fafaf0"/><rect x="10" y="4" width="44" height="10" fill="#f4c93c"/><path d="M12 22h40M12 30h40M12 38h40M12 46h40" stroke="#ddd" stroke-width="1"/></g></svg></span>
    <span class="di"><svg viewBox="0 0 64 64"><g transform="rotate(-6 32 32)"><rect x="12" y="5" width="42" height="54" rx="3" fill="#f8f8f8"/><circle cx="21" cy="16" r="3" fill="#f68b1f"/><circle cx="21" cy="27" r="3" fill="#2d9cf0"/><circle cx="21" cy="38" r="3" fill="#5ac85a"/><circle cx="21" cy="49" r="3" fill="#b266d8"/><path d="M28 16h20M28 27h20M28 38h20M28 49h20" stroke="#ddd"/></g></svg></span>
    <span class="di"><svg viewBox="0 0 64 64"><circle cx="32" cy="32" r="28" fill="#f2f2f2" stroke="#aaa"/><g fill-opacity=".85"><ellipse cx="32" cy="17" rx="7" ry="12" fill="#f5a623"/><ellipse cx="32" cy="47" rx="7" ry="12" fill="#4ea1e8"/><ellipse cx="17" cy="32" rx="12" ry="7" fill="#b06fd0"/><ellipse cx="47" cy="32" rx="12" ry="7" fill="#7fc94a"/><ellipse cx="21" cy="21" rx="7" ry="12" transform="rotate(-45 21 21)" fill="#ee4a4a"/><ellipse cx="43" cy="21" rx="7" ry="12" transform="rotate(45 43 21)" fill="#f4d23c"/><ellipse cx="21" cy="43" rx="7" ry="12" transform="rotate(45 21 43)" fill="#6a6adf"/><ellipse cx="43" cy="43" rx="7" ry="12" transform="rotate(-45 43 43)" fill="#4cc6a6"/></g></svg></span>
    <span class="di"><svg viewBox="0 0 64 64"><rect x="5" y="11" width="54" height="44" fill="#f4f4f4"/><path d="M5 11 32 35 59 11" fill="none" stroke="#dd4b39" stroke-width="6"/><path d="M5 11h7v44H5zM52 11h7v44h-7z" fill="#dd4b39"/></svg></span>
    <span class="di on"><svg viewBox="0 0 64 64"><path d="M32 6c-14 0-25 11-25 26 0 8 3 15 8 19-1 4-3 7-6 9 5 0 9-2 12-4 3 1 7 2 11 2 14 0 25-12 25-26S46 6 32 6z" fill="#2a9df4"/><ellipse cx="42" cy="44" rx="15" ry="12" fill="#f4f6f8"/><path d="M35 44h2M41 44h2M47 44h2" stroke="#0d6dbb" stroke-width="3"/></svg></span>
    <span class="di"><svg viewBox="0 0 64 64"><rect x="6" y="8" width="48" height="46" rx="10" fill="#37d05c"/><rect x="14" y="20" width="22" height="20" rx="3" fill="#fff"/><path d="M36 26l10-6v20l-10-6z" fill="#fff"/><circle cx="48" cy="46" r="13" fill="#f2f2f2"/><path d="M43 39c-1 6 4 12 10 13l2-3-4-3-2 2-3-5 2-1-2-4z" fill="#2fb64e"/></svg></span>
    <span class="di"><svg viewBox="0 0 64 64"><circle cx="32" cy="32" r="26" fill="#12a5e8"/><circle cx="19" cy="16" r="13" fill="#12a5e8"/><circle cx="45" cy="48" r="13" fill="#12a5e8"/><text class="d-skype" x="32" y="47">S</text></svg></span>
    <span class="di on"><svg viewBox="0 0 64 64"><path d="M8 10 36 2v60L8 54z" fill="#2b5fb0"/><rect x="36" y="12" width="24" height="42" fill="#fff"/><path d="M40 18h16M40 24h16M40 30h16M40 36h16M40 42h16M40 48h16" stroke="#334" stroke-width="2.500"/><text class="d-w" x="22" y="40">W</text></svg></span>
    <span class="di"><svg viewBox="0 0 64 64"><path d="M6 10 34 2v60L6 54z" fill="#1f7a40"/><rect x="34" y="12" width="26" height="42" fill="#fff"/><path d="M38 18h8v6h-8zM49 18h8v6h-8zM38 27h8v6h-8zM49 27h8v6h-8zM38 36h8v6h-8zM49 36h8v6h-8zM38 45h8v6h-8zM49 45h8v6h-8z" fill="#5f9a6e"/><text class="d-w" x="20" y="40">X</text></svg></span>
    <span class="di"><svg viewBox="0 0 64 64"><g transform="rotate(-8 32 32)"><rect x="10" y="4" width="42" height="56" fill="#fafafa"/><rect x="10" y="4" width="42" height="12" fill="#f08a1e"/><rect x="16" y="20" width="20" height="18" fill="#f6a04a"/><path d="M15 42h32M15 47h32M15 52h32" stroke="#ccc" stroke-width="1.500"/></g><path d="M46 54 56 4l3 1-10 50z" fill="#f6a124"/></svg></span>
    <span class="di"><svg viewBox="0 0 64 64"><path d="M22 4h20l20 36H42z" fill="#f7c52e"/><path d="M22 4 2 40l10 20 20-36z" fill="#1ea362"/><path d="M12 60h40l10-20H22z" fill="#4285f4"/></svg></span>
    <span class="di"><svg viewBox="0 0 64 64"><rect x="6" y="46" width="52" height="14" fill="#f4f4f4"/><rect x="11" y="30" width="9" height="26" fill="#e8504a"/><rect x="23" y="18" width="9" height="38" fill="#f29a2e"/><rect x="35" y="2" width="9" height="54" fill="#3fc86a"/><rect x="47" y="12" width="9" height="44" fill="#3aa0ea"/></svg></span>
    <span class="di"><svg viewBox="0 0 64 64"><rect x="8" y="3" width="48" height="36" rx="2" fill="#3e94e8"/><rect x="6" y="37" width="52" height="4" fill="#2670c4"/><rect x="16" y="8" width="32" height="26" fill="#f2f6fa"/><circle cx="32" cy="21" r="10" fill="#f5a623"/><path d="M32 21V11a10 10 0 0 1 9 14z" fill="#4ea1e8"/><path d="M32 21l9 4a10 10 0 0 1-9 6z" fill="#6ec04a"/><rect x="31" y="41" width="2" height="17" fill="#b4bcc4"/><ellipse cx="32" cy="58" rx="10" ry="4" fill="#c8d4dc"/></svg></span>
    <span class="di"><svg viewBox="0 0 64 64"><circle cx="32" cy="32" r="28" fill="#f4f4f4" stroke="#a060e0" stroke-width="2"/><path d="M26 44V20l16-5v24" fill="none" stroke="#ef3c64" stroke-width="4"/><ellipse cx="21" cy="44" rx="6" ry="5" fill="#8060e0"/><ellipse cx="37" cy="40" rx="6" ry="5" fill="#3a9ae8"/></svg></span>
    <span class="di on"><svg viewBox="0 0 64 64"><circle cx="32" cy="32" r="29" fill="#2fd566"/><g fill="none" stroke="#111" stroke-linecap="round"><path d="M13 22c12-3 26-2 37 4" stroke-width="5"/><path d="M15 33c10-3 23-2 32 4" stroke-width="4"/><path d="M17 43c9-2 19-1 27 3" stroke-width="3.500"/></g></svg></span>
    <span class="di"><svg viewBox="0 0 64 64"><circle cx="32" cy="32" r="28" fill="#e45a15" stroke="#f4f4f4" stroke-width="2"/><path d="M5 32a27 27 0 0 1 54 0z" fill="#f9a42c"/><path d="M31 20c-5-4-12-4-16-2v26c5-2 11-2 16 2zM33 20c5-4 12-4 16-2v26c-5-2-11-2-16 2z" fill="#f8f0e0"/></svg></span>
    <span class="di"><svg viewBox="0 0 64 64"><circle cx="32" cy="32" r="28" fill="#2185f0" stroke="#eef" stroke-width="2"/><path d="M32 12 18 46M32 12l14 34M12 36h40" stroke="#fff" stroke-width="4" fill="none"/></svg></span>
    <span class="di"><svg viewBox="0 0 64 64"><rect x="5" y="4" width="54" height="56" rx="5" fill="#a8aeb2"/><circle cx="32" cy="32" r="24" fill="#38393b"/><circle cx="32" cy="32" r="17" fill="#6e7073"/><circle cx="32" cy="32" r="5" fill="#ccc"/><path d="M32 15v34M17 24l30 16M47 24 17 40" stroke="#2a2a2a" stroke-width="5"/></svg></span>
    <span class="di on"><svg viewBox="0 0 64 64"><rect x="36" y="12" width="24" height="30" fill="#f8e48a" transform="rotate(4 48 27)"/><rect x="26" y="38" width="26" height="24" fill="#f8e48a"/><rect x="6" y="6" width="30" height="34" fill="#f4da66" transform="rotate(-14 21 23)"/><path d="M10 20l20-6M12 26l20-6M14 32l16-5" stroke="#665" stroke-width="1"/><path d="M42 22l12 2M42 28l10 1" stroke="#c33"/><path d="M32 48h14" stroke="#555"/></svg></span>
    <span class="di on"><svg viewBox="0 0 64 64"><path d="M36 12h20v44H36z" fill="#fafafa"/><path d="M8 10 38 2v60L8 54z" fill="#d84a27"/><circle cx="46" cy="24" r="7" fill="#333"/><path d="M40 38h14M40 43h14M40 48h14" stroke="#d84a27" stroke-width="2"/><text class="d-w" x="23" y="40">P</text></svg></span>
    <span class="di on"><svg viewBox="0 0 64 64"><g transform="rotate(-8 28 30)"><rect x="12" y="2" width="40" height="44" fill="#8a6a44"/><rect x="6" y="10" width="42" height="46" fill="#fff"/><rect x="9" y="13" width="36" height="40" fill="#5a8fc0"/><path d="M9 38c12-6 24 2 36 6v9H9z" fill="#e8d8b8"/></g><ellipse cx="50" cy="46" rx="11" ry="16" fill="#4a4a4a"/><ellipse cx="50" cy="40" rx="7" ry="8" fill="#a4b6c8"/></svg></span>
    <span class="di on"><svg viewBox="0 0 64 64"><rect x="2" y="1" width="60" height="62" fill="#ef8a1e"/><rect x="6" y="5" width="52" height="54" fill="#3a1d05"/><text class="d-ai" x="32" y="44">Ai</text></svg></span>
    <i class="dock-sep"></i>
    <span class="di"><svg viewBox="0 0 64 64"><path d="M5 8h22l4 8h28v46H5z" fill="#5ebff0"/><path d="M5 14h54v48H5z" fill="#7acdf6"/><circle cx="32" cy="37" r="15" fill="#58b2e0"/><path d="M28 27h8v10h6L32 48 22 37h6z" fill="#7acdf6"/></svg></span>
    <span class="di"><svg viewBox="0 0 64 64"><rect x="4" y="1" width="54" height="60" fill="#fff"/><rect x="4" y="1" width="54" height="5" fill="#3a6ab0"/><path d="M8 12h34M8 18h46M8 24h24M8 36h44M8 42h40M8 48h30" stroke="#888" stroke-width="1.500"/><rect x="36" y="18" width="14" height="8" fill="#d8c25a"/><path d="M46 44h14v19H46z" fill="#2b5fb0"/><text class="d-mini" x="53" y="58">W</text></svg></span>
    <span class="di"><svg viewBox="0 0 64 64"><rect x="4" y="6" width="56" height="42" fill="#fdfdfd" stroke="#ccc"/><rect x="4" y="6" width="56" height="3" fill="#c74b2a"/><rect x="20" y="18" width="24" height="3" fill="#999"/><rect x="22" y="24" width="20" height="2" fill="#bbb"/><path d="M38 42h14v20H38z" fill="#d84a27"/><text class="d-mini" x="45" y="57">P</text></svg></span>
    <span class="di"><svg viewBox="0 0 64 64"><rect x="4" y="3" width="56" height="54" fill="#fff" stroke="#bbb"/><text class="d-isu" x="32" y="28">IOWA STATE UNIVERSITY</text><g transform="translate(38 38)"><rect x="2" y="0" width="20" height="24" fill="#8aa6c4"/><ellipse cx="20" cy="18" rx="6" ry="9" fill="#444"/></g></svg></span>
    <span class="di"><svg viewBox="0 0 64 64"><rect x="4" y="5" width="54" height="54" fill="#1a1c1a"/><path d="M8 13h46M8 20h46M8 27h46M8 34h46M8 41h46M8 48h46" stroke="#4a4a4a" stroke-width="3" stroke-dasharray="4 2"/><rect x="8" y="7" width="7" height="3" fill="#3ac060"/><rect x="44" y="7" width="7" height="3" fill="#3ac060"/><ellipse cx="50" cy="48" rx="10" ry="15" fill="#2fd566"/><path d="M44 44c4-1 8-1 12 1M45 49c3-1 7-1 10 1" stroke="#111" stroke-width="2" fill="none"/></svg></span>
    <span class="di"><svg viewBox="0 0 64 64"><path d="M10 14c10-3 34-3 44 0l-4 46c-8 3-28 3-36 0z" fill="#e0e0e0"/><path d="M10 14c10 4 34 4 44 0-4-8-36-8-44 0z" fill="#f8f8f8"/><path d="M18 12l6-7 5 7zM30 14l7-9 6 8z" fill="#444"/><path d="M22 14l4-3 3 3zM36 13l3-4 3 4z" fill="#3a9ae8"/></svg></span>
    <i class="dock-pill"></i>
  </div>
</footer>
</body>
</html>
```

FILE: styles.css
```css
* { box-sizing: border-box; }
html, body { margin: 0; padding: 0; }
body {
  width: 2880px; height: 1800px; overflow: hidden;
  display: flex; flex-direction: column;
  background: #1d2a3b;
  font-family: "DejaVu Sans", sans-serif;
  font-size: 19px;
  color: #d8d8d8;
}
.defs { display: block; width: 0; height: 0; }
i { display: block; font-style: normal; }
svg { display: block; }

/* menu bar */
.menubar {
  flex: none; height: 46px;
  display: flex; align-items: center;
  padding-left: 42px;
  color: #fff;
  font-family: "Liberation Sans", sans-serif;
  font-size: 29.500px;
  background:
    linear-gradient(90deg, transparent 606px, #d9b0b4 606px, #d9b0b4 987px, transparent 987px, transparent 1747px, #d9b0b4 1747px, #d9b0b4 2129px, transparent 2129px) 0 100% / 100% 2px no-repeat,
    linear-gradient(90deg, #1f2835 0, #1f2835 600px, #4f3e42 760px, #54403f 850px, #4a3d45 950px, #1f2835 1130px, #1f2835 1760px, #33323c 1800px, #54403f 1900px, #4f3d40 1950px, #333340 2080px, #1f2835 2220px);
}
.apple { width: 28px; height: 34px; margin-top: -5px; }
.menus { display: flex; margin-left: 38px; gap: 36.200px; }
.appname { font-weight: 700; font-size: 29px; }
.status-icons { display: flex; align-items: center; margin-left: auto; margin-right: 45px; font-size: 28.500px; }
.si { flex: none; }
.si-cc { width: 40px; height: 40px; }
.si-air { width: 40px; height: 36px; margin-left: 25px; }
.si-vol { width: 30px; height: 36px; margin-left: 20px; }
.si-wifi { width: 40px; height: 38px; margin-left: 30px; }
.batt { margin-left: 23px; font-size: 27px; }
.si-bat { width: 46px; height: 34px; margin-left: 10px; }
.clock { margin-left: 28px; white-space: nowrap; }
.clock-2 { margin-left: 19px; }
.si-search { width: 30px; height: 38px; margin-left: 38px; }
.si-list { width: 38px; height: 30px; margin-left: 27px; }

/* window */
.window {
  flex: none; height: 1672px; width: 2878px;
  display: flex; flex-direction: column;
  border-radius: 12px 12px 0 0;
  overflow: hidden;
  border-top: 2px solid #2c2c2c;
  background: #2a2a2a;
}
.appbar {
  flex: none; height: 68px;
  display: flex; align-items: center;
  background: linear-gradient(#636363, #494949);
  border-bottom: 2px solid #2b2b2b;
}
.light { width: 22px; height: 22px; border-radius: 50%; margin-left: 17px; flex: none; }
.light-r { margin-left: 17px; background: #fc5c57; display: flex; align-items: center; justify-content: center; }
.light-r i { width: 8px; height: 8px; border-radius: 50%; background: #6a0a08; }
.light-y { background: #fdbb2e; }
.light-g { background: #2cc841; }
.ai-mark { margin-left: 36px; width: 36px; font-family: "Noto Sans", sans-serif; font-size: 44px; color: #b07c5c; line-height: 1; }
.brbox, .stbox {
  width: 32px; height: 34px; margin-left: 48px;
  display: flex; align-items: center; justify-content: center;
  font-size: 17px;
}
.brbox { border: 2px solid #5a5a5a; color: #6e6e6e; background: #4d4d4d; }
.stbox { margin-left: 40px; border: 2px solid #b8b8b8; border-width: 3px 2px; background: #333; color: #c8c8c8; }
.arr-layout { width: 52px; height: 34px; margin-left: 50px; }
.rocket { width: 34px; height: 38px; margin-left: 29px; }
.vsep { flex: none; width: 1px; height: 44px; background: #2e2e2e; border-right: 1px solid #585858; box-sizing: content-box; }
.vsep-ess { height: 44px; margin-left: auto; }
.essentials { margin-left: 24px; font-size: 22px; font-weight: 700; color: #d8d8d8; text-shadow: 0 1px 1px #222; }
.caret { width: 0; height: 0; border-style: solid; border-width: 9px 6px 0; border-color: #cfcfcf transparent transparent; }
.caret-ess { margin-left: 12px; border-width: 7px 5px 0; }
.vsep-search { margin-left: 36px; }
.searchfield {
  width: 258px; height: 36px; margin: 0 11px 0 13px;
  background: #a6a6a6; border: 2px solid #333; border-bottom-width: 3px;
}
.searchglass { width: 22px; height: 30px; margin-left: 4px; }

/* control bar */
.control {
  flex: none; height: 68px;
  display: flex; align-items: center;
  background: #484848;
  border-top: 2px solid #565656;
  border-bottom: 2px solid #2b2b2b;
  line-height: 1;
}
.cgrip { width: 2px; height: 40px; margin-left: 10px; border-left: 2px dotted #111; }
.ctl-title { margin-left: 16px; width: 177px; color: #d6d6d6; text-shadow: 0 1px 1px #222; }
.control > .vsep { height: 40px; }
.combo { flex: none; display: flex; align-items: stretch; height: 38px; border: 2px solid #333; background: #333; }
.dd { flex: none; width: 31px; display: flex; align-items: center; justify-content: center; background: #585858; }
.swatch { width: 68px; margin-left: 14px; }
.swatch-2 { margin-left: 15px; }
.sw-fill { flex: 1; background: #000; border: 3px solid #fff; }
.sw-none { flex: 1; background: #fff; }
.sw-none svg { width: 100%; height: 100%; }
.swatch .dd { width: 30px; }
.lnk {
  flex: none; margin-top: 2px; padding-bottom: 3px;
  color: #f2a144;
  border-bottom: 2px dotted #d98a32;
  white-space: nowrap;
  text-shadow: 0 1px 1px #222;
}
.lnk-stroke { margin-left: 25px; width: 67px; }
.combo-stroke { margin-left: 13px; width: 172px; }
.stepper { flex: none; width: 36px; display: flex; flex-direction: column; gap: 3px; background: #333; }
.stepper .up, .stepper .down { flex: 1; background: #585858; display: flex; align-items: center; justify-content: center; }
.stepper .up::after { content: ""; border-style: solid; border-width: 0 5px 10px; border-color: transparent transparent #d0d0d0; }
.stepper .down::after { content: ""; border-style: solid; border-width: 10px 5px 0; border-color: #d0d0d0 transparent transparent; }
.field { background: #a4a4a4; color: #0c0c0c; display: flex; align-items: center; padding-left: 6px; white-space: nowrap; font-size: 19px; }
.field-stroke { flex: 1; }
.combo-dis { margin-left: 14px; width: 213px; background: #3a3a3a; }
.field-dis { flex: 1; background: #777; border: 4px solid #666; }
.dd-dis { width: 33px; background: #4f4f4f; }
.caret-dim { border-top-color: #767676; }
.lnk-opacity { margin-left: 17px; width: 78px; }
.combo-op { margin-left: 14px; width: 151px; }
.field-op { flex: 1; }
.dd-op { width: 30px; }
.tri-r { width: 0; height: 0; border-style: solid; border-width: 10px 0 10px 9px; border-color: transparent transparent transparent #d0d0d0; }
.globe { width: 28px; height: 30px; margin-left: 40px; }
.vsep-char { margin-left: 22px; }
.lnk-char { margin-left: 15px; width: 98px; }
.combo-font { margin-left: 14px; width: 362px; }
.field-font { flex: 1; padding-left: 6px; }
.fontglass { width: 34px; height: 30px; margin-right: 8px; }
.dd-font { width: 37px; }
.combo-weight { margin-left: 13px; width: 149px; }
.field-weight { flex: 1; border: 0 solid #b8b8b8; border-width: 6px 0; }
.combo-size { margin-left: 16px; width: 171px; }
.combo-size .stepper { width: 34px; }
.field-size { flex: 1; }
.lnk-para { margin-left: 17px; width: 105px; }
.aligns { flex: none; display: flex; gap: 2px; margin-left: 13px; width: 153px; height: 44px; background: #2e2e2e; padding-bottom: 4px; }
.al { flex: 1; display: flex; align-items: center; justify-content: center; background: #5e5e5e; }
.al-on { background: #333; }
.al svg { width: 30px; height: 28px; }
.vsep-p { margin-left: 12px; }
.lnk-align { margin-left: 16px; width: 52px; }
.vsep-a { margin-left: 11px; }
.lnk-trans { margin-left: 16px; width: 101px; }
.ctlmenu { width: 30px; height: 26px; margin-left: auto; margin-right: 33px; }

/* workspace */
.workspace { flex: 1; min-height: 0; display: flex; border-bottom: 1px solid #222; }
.toolbar { flex: none; width: 146px; display: flex; flex-direction: column; border-right: 6px solid #2c2c2c; }
.tb-head { flex: none; height: 23px; background: linear-gradient(#2b2b2b, #383838); display: flex; align-items: center; padding-left: 9px; }
.chev { width: 15px; height: 14px; }
.tb-body { flex: 1; background: #484848; border-top: 1px solid #5a5a5a; display: flex; flex-direction: column; }
.grip {
  width: 38px; height: 8px;
  background: repeating-linear-gradient(90deg, #0e0e0e 0 2px, transparent 2px 4px);
}
.tb-grip { margin: 10px 0 14px 50px; }
.tgroup { display: flex; flex-direction: column; }
.trow { display: flex; padding-left: 10px; height: 48px; }
.tool { width: 60px; height: 48px; display: flex; align-items: center; justify-content: center; position: relative; }
.tool svg { width: 40px; height: 40px; }
.more::after {
  content: ""; position: absolute; right: 2px; bottom: 0;
  border-style: solid; border-width: 0 0 7px 7px;
  border-color: transparent transparent #c4c4c4;
}
.tool-on { margin-left: 2px; width: 56px; height: 44px; margin-top: 2px; background: #333; border: 2px solid #262626; }
.tool-on.more::after { right: 0; bottom: 0; }
.t-glyph { font-family: "Liberation Serif", serif; font-size: 40px; line-height: 1; color: #c0c0c0; }
.tool-on + .tool { margin-left: 2px; }
.tsep { height: 2px; margin: 0 10px 2px; background: #333; border-bottom: 1px solid #525252; }
.colorbox { position: relative; height: 107px; margin-top: 3px; }
.fill-box { position: absolute; left: 10px; top: 3px; width: 72px; height: 69px; background: #000; border: 3px solid #2c2c2c; box-shadow: inset 0 0 0 3px #fff; }
.stroke-box { position: absolute; left: 46px; top: 37px; width: 72px; height: 70px; }
.swap { position: absolute; left: 97px; top: 4px; width: 24px; height: 22px; }
.defaults { position: absolute; left: 10px; top: 83px; width: 24px; height: 24px; }
.modes { display: flex; margin: 0 12px; width: 118px; background: #2e2e2e; padding: 3px; border-radius: 1px; }
.modes-a { height: 37px; margin-top: 17px; }
.modes-b { height: 33px; margin-top: 13px; }
.mode { flex: 1; display: flex; align-items: center; justify-content: center; background: #5a5a5a; }
.mode-on { background: #333; }
.mode svg { width: 22px; height: 22px; }
.m-black { width: 26px; height: 25px; background: #000; }
.m-grad { width: 26px; height: 25px; border: 2px solid #000; background: linear-gradient(90deg, #f4f4f4, #222); }
.mode .m-none { width: 26px; height: 25px; }
.screen { width: 44px; height: 34px; margin: 18px 0 0 46px; }

/* main */
.main { flex: 1; min-width: 0; display: flex; flex-direction: column; position: relative; }
.tabrow { flex: none; height: 40px; background: #333; border-bottom: 2px solid #262626; padding-left: 1px; }
.tab { width: 565px; height: 38px; background: #4a4a4a; display: flex; align-items: center; padding: 2px 0 0 20px; color: #d8d8d8; text-shadow: 0 1px 1px #222; white-space: nowrap; font-size: 20px; letter-spacing: .15px; }
.xmark { width: 12px; height: 12px; margin-right: 15px; }
.canvas { flex: 1; min-height: 0; display: flex; background: #5c5c5c; padding-top: 22px; }
.artboard { display: flex; flex-direction: column; height: 1424px; position: relative; background: #fff; }
.side { width: 221px; border-right: 2px solid #8a8a8a; border-bottom: 2px solid #8a8a8a; border-top: 2px solid #8a8a8a; box-shadow: 3px 3px 0 #535353; }
.big { width: 2134px; margin-left: 55px; border: 2px solid #0c0c0c; box-shadow: 4px 4px 0 #535353; }
.ab-page { flex: 1; }
.ab-band { flex: none; height: 150px; display: flex; }
.band-white { width: 444px; background: #fff; }
.band-red { flex: 1; background: #a51e34; }

.textframe {
  position: absolute; left: 218px; top: 222px;
  width: 1617px; height: 749px;
  border: 2px solid #4f7df5;
  color: #000;
  font-family: "Open Sans", sans-serif;
  font-size: 127px;
  font-weight: 500;
  line-height: 162px;
}
.tl { margin: 0 0 0 -4px; white-space: nowrap; }
.tl-1 { margin-top: -33px; letter-spacing: -3.800px; }
.tl-2 { letter-spacing: -3.100px; }
.tl-3 { letter-spacing: -2.800px; }
.tl-4 { letter-spacing: -2.200px; }
.caretbar { position: absolute; left: 1344px; top: 692px; width: 2px; height: 148px; background: #000; }
.centermark { position: absolute; left: 1021px; top: 592px; width: 8px; height: 8px; }
.logo { position: absolute; left: 1px; top: 1119px; width: 400px; height: 300px; overflow: visible; }
.logo-letters text {
  font-family: "DejaVu Serif", serif; font-weight: 700; font-size: 300px;
  text-anchor: middle;
  fill: url(#ly); stroke: #7e1529; stroke-width: 17px; paint-order: stroke;
}
.logo-tm { font-family: "Liberation Sans", sans-serif; font-size: 46px; font-weight: 700; fill: #fdc637; }
.vscroll {
  width: 32px; height: 1459px; margin: -22px 0 0 auto;
  background: #343434; border: 2px solid #2a2a2a;
  display: flex; flex-direction: column; justify-content: flex-end; align-items: center;
  padding-bottom: 7px;
}
.tri-d { width: 0; height: 0; border-style: solid; border-width: 11px 10px 0; border-color: #d0d0d0 transparent transparent; }

/* status bar */
.statusbar {
  flex: none; height: 33px;
  display: flex; align-items: stretch;
  background: #4a4a4a;
  border-top: 2px solid #2c2c2c;
  border-bottom: 1px solid #333;
}
.st-share { width: 26px; height: 28px; margin: 1px 0 0 20px; }
.st-combo { display: flex; height: 29px; background: #333; }
.st-zoom { width: 132px; margin-left: 24px; }
.st-page { width: 113px; margin-left: 22px; }
.st-field { flex: 1; background: #a2a2a2; color: #0c0c0c; padding-left: 6px; line-height: 32px; overflow: hidden; }
.st-combo .dd { width: 28px; margin-left: 2px; }
.st-nav { width: 50px; height: 24px; margin-top: 4px; }
.st-nav-a { margin-left: 19px; }
.st-nav-b { margin-left: 22px; }
.st-msg { flex: none; width: 394px; margin-left: 14px; border-left: 1px solid #383838; border-right: 1px solid #383838; text-align: center; line-height: 33px; color: #c8c8c8; font-size: 19.500px; }
.st-btn { flex: none; width: 44px; display: flex; align-items: center; justify-content: center; }
.tri-sm { border-width: 10px 0 10px 9px; }
.hscroll {
  flex: none; width: 1772px; margin-left: 3px;
  background: #343434;
  display: flex; align-items: center;
}
.tri-l { width: 0; height: 0; margin-left: 9px; border-style: solid; border-width: 10px 9px 10px 0; border-color: transparent #d0d0d0 transparent transparent; }
.thumb { width: 32px; height: 30px; margin-left: 884px; background: #868686; }
.tri-big { margin-left: auto; margin-right: 14px; border-width: 11px 0 11px 12px; }
.corner { flex: 1; background: #484848; border-left: 2px solid #2c2c2c; }

/* dock panel */
.dockpanel {
  position: absolute; top: -6px; right: 0;
  width: 291px; height: 942px;
  display: flex; flex-direction: column;
}
.dp-head {
  flex: none; height: 28px; width: 291px;
  background: linear-gradient(#333, #2a2a2a);
  border-radius: 10px 10px 0 0;
  border: 2px solid #2a2a2a;
  display: flex; align-items: center;
}
.dp-x { width: 12px; height: 12px; margin-left: 10px; }
.dp-ff { width: 14px; height: 12px; }
.dp-ff-1 { margin-left: 174px; }
.dp-ff-2 { margin-left: 62px; }
.dp-body { flex: 1; display: flex; justify-content: space-between; align-items: flex-start; }
.flyout {
  width: 211px; height: 193px;
  background: #484848;
  border: 2px solid #2a2a2a; border-top: 1px solid #5a5a5a;
  box-shadow: 2px 4px 8px rgba(0,0,0,.35);
  display: flex; flex-direction: column;
}
.fly-grip { margin: 6px 0 5px 84px; }
.fly-row { height: 56px; display: flex; align-items: center; }
.fly-row b { font-size: 18px; color: #dcdcdc; text-shadow: 0 1px 1px #222; }
.fly-ico { width: 72px; text-align: center; padding-left: 12px; color: #bdbdbd; line-height: 1; display: flex; justify-content: center; }
.fly-a { font-family: "Liberation Sans", sans-serif; font-size: 34px; }
.fly-a i { width: 2px; height: 36px; background: #bbb; margin-left: 2px; }
.fly-p { font-family: "Liberation Serif", serif; font-size: 36px; }
.fly-o { font-family: "Liberation Serif", serif; font-style: italic; font-size: 42px; }
.strip { width: 76px; height: 914px; border-left: 2px solid #2a2a2a; border-right: 2px solid #2a2a2a; border-bottom: 2px solid #2a2a2a; margin-left: 4px; background: #2a2a2a; display: flex; flex-direction: column; gap: 2px; }
.sgroup { background: #484848; border-top: 1px solid #5a5a5a; display: flex; flex-direction: column; align-items: center; }
.s1 { height: 192px; }
.s3 { height: 193px; }
.s4 { height: 192px; }
.s5 { flex: 1; }
.sgroup .grip { margin: 5px 0 5px -6px; }
.sic { width: 40px; height: 56px; display: flex; align-items: center; justify-content: center; }
.sic svg { width: 40px; height: 40px; }

/* desktop + dock */
.desk { flex: 1; position: relative; background: linear-gradient(90deg, #1c3145, #1f2c40 300px); }
.wall { position: absolute; inset: 0; width: 2880px; height: 82px; }
.dock {
  position: relative; width: 2278px; height: 82px; margin-left: 302px;
  display: flex; padding-left: 4px; padding-top: 8px;
  background: linear-gradient(90deg, #46393f, #2a2a40 170px, #25283b 1000px, #2a2c40 1330px, #4b3e48 1480px, #4a3f48 1530px, #2a2b3f 1700px, #282a3e 2278px);
  border-top-right-radius: 14px;
}
.di { flex: none; width: 64px; height: 64px; position: relative; display: flex; justify-content: center; }
.di svg { width: 58px; height: 58px; }
.di.on::after { content: ""; position: absolute; left: 29px; top: 63px; width: 5px; height: 6px; border-radius: 50%; background: #aab; }
.dock-sep { flex: none; width: 28px; position: relative; }
.dock-sep::after { content: ""; position: absolute; left: 14px; top: 3px; width: 1px; height: 60px; background: #667; }
.dock-pill { position: absolute; left: 1850px; top: 71px; width: 53px; height: 6px; border-radius: 3px; background: #9298ac; }
.d-cal-m, .d-cal, .d-gcal, .d-skype, .d-w, .d-ai, .d-mini, .d-isu { font-family: "Liberation Sans", sans-serif; text-anchor: middle; }
.d-cal-m { font-size: 11px; fill: #fff; }
.d-cal { font-size: 30px; fill: #222; }
.d-gcal { font-size: 32px; font-weight: 700; fill: #333; }
.d-skype { font-size: 42px; font-weight: 700; fill: #fff; }
.d-w { font-size: 26px; font-weight: 700; fill: #fff; }
.d-ai { font-size: 36px; fill: #ef8a1e; }
.d-mini { font-size: 13px; font-weight: 700; fill: #fff; }
.d-isu { font-size: 4.800px; font-weight: 700; fill: #a51e34; font-family: "Liberation Serif", serif; }
```
